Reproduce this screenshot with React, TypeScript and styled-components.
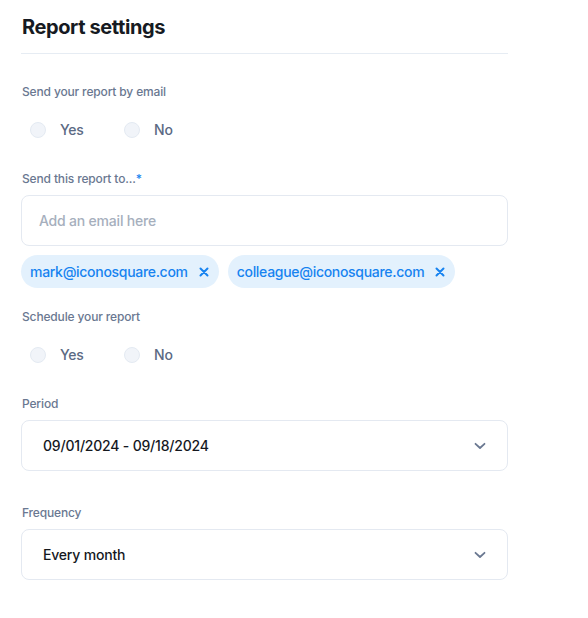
import React from "react";
import styled, { createGlobalStyle } from "styled-components";

const Global = createGlobalStyle`
  html, body { margin: 0; padding: 0; background: #ffffff; }
  body { font-family: Inter, "Open Sans", sans-serif; -webkit-font-smoothing: antialiased; }
  * { box-sizing: border-box; }
`;

const Page = styled.div`
  width: 487px;
  margin-left: 21px;
  padding-top: 14px;
  display: flex;
  flex-direction: column;
`;

const Title = styled.h1`
  margin: 0;
  padding-left: 1px;
  font-size: 20px;
  line-height: 26px;
  font-weight: 700;
  color: #161a22;
  letter-spacing: -0.4px;
`;

const Divider = styled.div`
  height: 1px;
  background: #e6ecf3;
  margin-top: 13px;
  margin-bottom: 30px;
`;

const Section = styled.section<{ $gap?: number }>`
  display: flex;
  flex-direction: column;
  margin-bottom: ${(p) => p.$gap ?? 0}px;
`;

const Label = styled.div`
  font-size: 12px;
  line-height: 16px;
  font-weight: 500;
  color: #6a7891;
  letter-spacing: -0.15px;
  padding-left: 1px;
`;

const Star = styled.span`
  color: #1d86f0;
`;

const RadioRow = styled.div`
  display: flex;
  align-items: center;
  margin-top: 20px;
  padding-left: 9px;
`;

const RadioOption = styled.label`
  display: flex;
  align-items: center;
  gap: 14px;
  width: 94px;
  font-size: 14px;
  line-height: 20px;
  font-weight: 500;
  color: #5b6a84;
  letter-spacing: -0.2px;
`;

const Circle = styled.span`
  width: 16px;
  height: 16px;
  border-radius: 50%;
  background: #f1f4f9;
  border: 1.5px solid #e4eaf2;
`;

const Field = styled.div`
  margin-top: 8px;
  height: 51px;
  border: 1px solid #e4e9f1;
  border-radius: 8px;
  display: flex;
  align-items: center;
  justify-content: space-between;
  padding: 0 21px 0 21px;
  font-size: 14px;
  font-weight: 500;
  letter-spacing: -0.2px;
  color: #15181e;
`;

const Placeholder = styled.span`
  color: #a6afbd;
  font-weight: 500;
  margin-left: -4px;
`;

const Chips = styled.div`
  display: flex;
  gap: 9px;
  margin-top: 9px;
`;

const Chip = styled.div`
  display: flex;
  align-items: center;
  height: 33px;
  border-radius: 17px;
  background: #e3f1fd;
  padding: 0 10px 0 9px;
  gap: 11px;
  font-size: 14px;
  font-weight: 500;
  letter-spacing: -0.3px;
  color: #1783f0;
`;

const X = () => (
  <svg width="10" height="10" viewBox="0 0 10 10">
    <path d="M1.5 1.5 L8.5 8.5 M8.5 1.5 L1.5 8.5" stroke="#1783f0" strokeWidth="2" strokeLinecap="round" />
  </svg>
);

const Chevron = () => (
  <svg width="12" height="8" viewBox="0 0 12 8">
    <path d="M1.5 1.8 L6 6 L10.5 1.8" stroke="#6a7891" strokeWidth="1.8" fill="none" strokeLinecap="round" strokeLinejoin="round" />
  </svg>
);

const Radios = () => (
  <RadioRow>
    <RadioOption>
      <Circle />
      Yes
    </RadioOption>
    <RadioOption>
      <Circle />
      No
    </RadioOption>
  </RadioRow>
);

export default function App() {
  return (
    <>
      <Global />
      <Page>
        <Title>Report settings</Title>
        <Divider />
        <Section $gap={31}>
          <Label>Send your report by email</Label>
          <Radios />
        </Section>
        <Section $gap={21}>
          <Label>
            Send this report to...<Star>*</Star>
          </Label>
          <Field>
            <Placeholder>Add an email here</Placeholder>
          </Field>
          <Chips>
            <Chip>
              mark@iconosquare.com
              <X />
            </Chip>
            <Chip>
              colleague@iconosquare.com
              <X />
            </Chip>
          </Chips>
        </Section>
        <Section $gap={31}>
          <Label>Schedule your report</Label>
          <Radios />
        </Section>
        <Section $gap={34}>
          <Label>Period</Label>
          <Field>
            <span>09/01/2024 - 09/18/2024</span>
            <Chevron />
          </Field>
        </Section>
        <Section>
          <Label>Frequency</Label>
          <Field>
            <span>Every month</span>
            <Chevron />
          </Field>
        </Section>
      </Page>
    </>
  );
}
